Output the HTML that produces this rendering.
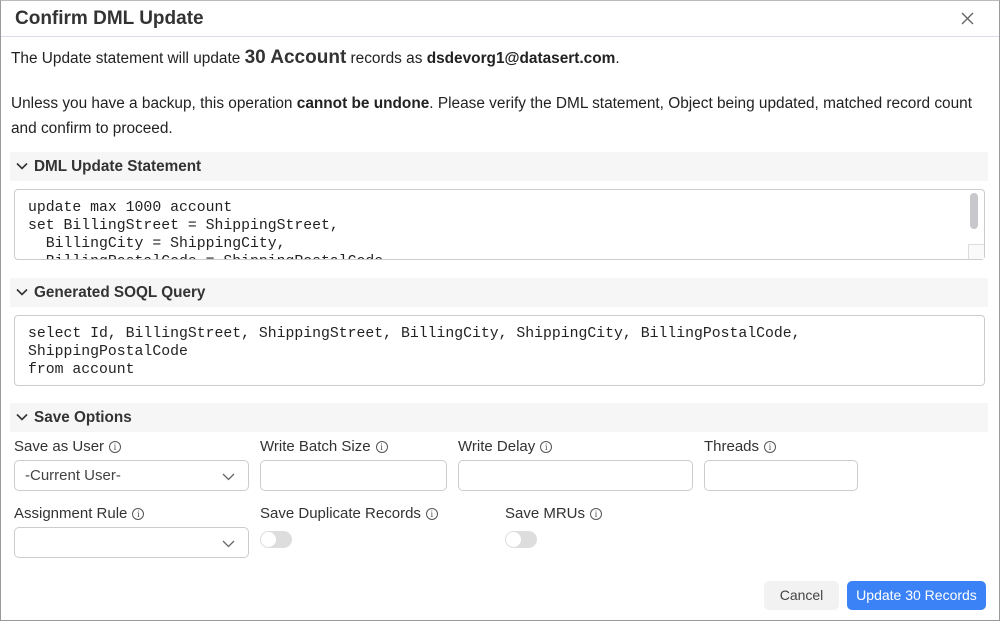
<!DOCTYPE html>
<html><head><meta charset="utf-8"><style>
*{box-sizing:border-box;margin:0;padding:0}
body{width:1001px;height:622px;background:#fff;font-family:"Liberation Sans",sans-serif;color:#222;position:relative;overflow:hidden}
.frame{position:absolute;left:0;top:0;width:1000px;height:621px;border:1px solid #999;border-top-color:#bbb}
.a{position:absolute;white-space:nowrap}
.hdr{position:absolute;left:1px;top:36px;width:998px;height:1px;background:#d8dde6}
.t{font-size:15.4px;color:#222}
.bar{position:absolute;left:10px;width:978px;height:29px;background:#f6f6f6}
.bar span{position:absolute;left:24px;top:6px;font-size:15.3px;font-weight:bold;color:#333}
.bar svg{position:absolute;left:6px;top:10px}
.ta{position:absolute;left:14px;width:971px;height:71px;border:1px solid #ccc;border-radius:4px;overflow:hidden;font-family:"Liberation Mono",monospace;font-size:14.8px;line-height:18px;color:#222;padding:9px 13px;white-space:pre}
.lbl{position:absolute;font-size:15px;color:#333}
.in{position:absolute;height:31px;border:1px solid #ccc;border-radius:5px;background:#fff}
.tg{position:absolute;width:32px;height:17px;border-radius:9px;background:#ddd}
.tg:after{content:"";position:absolute;left:1px;top:1px;width:15px;height:15px;border-radius:50%;background:#fff}
.i{display:inline-block;width:12px;height:12px;border:1px solid #555;border-radius:50%;font-size:9px;line-height:10px;text-align:center;vertical-align:1px;margin-left:5px;font-family:"Liberation Serif",serif;color:#444}
</style></head><body>
<div class="frame"></div>
<div class="a" style="left:15px;top:8px;font-size:19px;font-weight:bold;color:#333">Confirm DML Update</div>
<svg class="a" style="left:961px;top:12px" width="13" height="13" viewBox="0 0 13 13"><path d="M1 1L12 12M12 1L1 12" stroke="#666" stroke-width="1.4"/></svg>
<div class="hdr"></div>
<div class="a t" style="left:11px;top:47px">The Update statement will update <b style="font-size:19px;color:#333">30 Account</b> records as <b>dsdevorg1@datasert.com</b>.</div>
<div class="a t" style="left:11px;top:95px">Unless you have a backup, this operation <b>cannot be undone</b>. Please verify the DML statement, Object being updated, matched record count</div>
<div class="a t" style="left:11px;top:120px">and confirm to proceed.</div>

<div class="bar" style="top:152px"><svg width="12" height="8" viewBox="0 0 12 8"><path d="M1 1.5L6 6.5L11 1.5" stroke="#333" stroke-width="1.6" fill="none"/></svg><span>DML Update Statement</span></div>
<div class="ta" style="top:189px;height:71px">update max 1000 account
set BillingStreet = ShippingStreet,
  BillingCity = ShippingCity,
  BillingPostalCode = ShippingPostalCode</div>
<div class="a" style="left:970px;top:193px;width:8px;height:36px;border-radius:4px;background:#c8c8cc"></div>
<div class="a" style="left:968px;top:244px;width:16px;height:15px;border-left:1px solid #ddd;border-top:1px solid #ddd;background:#fafafa"></div>

<div class="bar" style="top:278px"><svg width="12" height="8" viewBox="0 0 12 8"><path d="M1 1.5L6 6.5L11 1.5" stroke="#333" stroke-width="1.6" fill="none"/></svg><span>Generated SOQL Query</span></div>
<div class="ta" style="top:315px;height:71px">select Id, BillingStreet, ShippingStreet, BillingCity, ShippingCity, BillingPostalCode,
ShippingPostalCode
from account</div>

<div class="bar" style="top:403px"><svg width="12" height="8" viewBox="0 0 12 8"><path d="M1 1.5L6 6.5L11 1.5" stroke="#333" stroke-width="1.6" fill="none"/></svg><span>Save Options</span></div>

<div class="lbl" style="left:14px;top:438px">Save as User<span class="i">i</span></div>
<div class="lbl" style="left:260px;top:438px">Write Batch Size<span class="i">i</span></div>
<div class="lbl" style="left:458px;top:438px">Write Delay<span class="i">i</span></div>
<div class="lbl" style="left:704px;top:438px">Threads<span class="i">i</span></div>
<div class="in" style="left:14px;top:460px;width:235px"><span class="a" style="left:10px;top:6px;font-size:15px;color:#444">-Current User-</span><svg class="a" style="left:207px;top:12px" width="13" height="8" viewBox="0 0 13 8"><path d="M1 1L6.5 6.5L12 1" stroke="#666" stroke-width="1.3" fill="none"/></svg></div>
<div class="in" style="left:260px;top:460px;width:187px"></div>
<div class="in" style="left:458px;top:460px;width:235px"></div>
<div class="in" style="left:704px;top:460px;width:154px"></div>

<div class="lbl" style="left:14px;top:505px">Assignment Rule<span class="i">i</span></div>
<div class="lbl" style="left:260px;top:505px">Save Duplicate Records<span class="i">i</span></div>
<div class="lbl" style="left:505px;top:505px">Save MRUs<span class="i">i</span></div>
<div class="in" style="left:14px;top:527px;width:235px"><svg class="a" style="left:207px;top:12px" width="13" height="8" viewBox="0 0 13 8"><path d="M1 1L6.5 6.5L12 1" stroke="#666" stroke-width="1.3" fill="none"/></svg></div>
<div class="tg" style="left:260px;top:531px"></div>
<div class="tg" style="left:505px;top:531px"></div>

<div class="a" style="left:764px;top:581px;width:75px;height:29px;border-radius:5px;background:#f2f2f2;font-size:14px;color:#444;text-align:center;line-height:29px">Cancel</div>
<div class="a" style="left:847px;top:581px;width:139px;height:29px;border-radius:5px;background:#3b82f6;font-size:14px;color:#fff;text-align:center;line-height:29px">Update 30 Records</div>
</body></html>
